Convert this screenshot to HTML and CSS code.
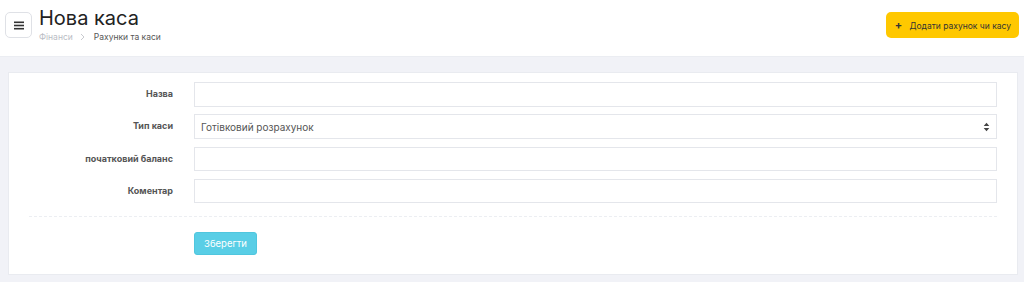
FILE: index.html
```html
<!DOCTYPE html>
<html lang="uk">
<head>
    <meta charset="UTF-8">
    <title>Нова каса</title>
    <link rel="stylesheet" href="styles.css">
</head>
<body>
    <div class="topbar">
        <button class="menu-btn">
            <svg width="10" height="9" viewBox="0 0 10 9"><rect x="0" y="0.5" width="10" height="1.6" fill="#333"/><rect x="0" y="3.7" width="10" height="1.6" fill="#333"/><rect x="0" y="6.9" width="10" height="1.6" fill="#333"/></svg>
        </button>
        <div class="title-block">
            <h1>Нова каса</h1>
            <div class="crumbs">
                <a href="#">Фінанси</a>
                <svg class="sep" width="5" height="8" viewBox="0 0 5 8"><path d="M1 1 L4 4 L1 7" fill="none" stroke="#c8cacf" stroke-width="1"/></svg>
                <span class="current">Рахунки та каси</span>
            </div>
        </div>
        <button class="add-btn"><span class="plus">+</span> Додати рахунок чи касу</button>
    </div>

    <div class="content">
        <div class="card">
            <form class="form">
                <div class="row">
                    <label>Назва</label>
                    <input type="text">
                </div>
                <div class="row">
                    <label>Тип каси</label>
                    <div class="select">
                        <span>Готівковий розрахунок</span>
                        <svg width="7" height="10" viewBox="0 0 7 10"><path d="M0.7 4 L3.5 0.8 L6.3 4 Z M0.7 6 L3.5 9.2 L6.3 6 Z" fill="#444"/></svg>
                    </div>
                </div>
                <div class="row">
                    <label>початковий баланс</label>
                    <input type="text">
                </div>
                <div class="row">
                    <label>Коментар</label>
                    <input type="text">
                </div>
                <div class="divider"></div>
                <div class="row last">
                    <span></span>
                    <div><button type="button" class="save-btn">Зберегти</button></div>
                </div>
            </form>
        </div>
    </div>
</body>
</html>
```
FILE: styles.css
```css
body {
    margin: 0;
    font-family: Inter, "Noto Sans", sans-serif;
    background-color: #f1f2f7;
    color: #333;
}

.topbar {
    display: flex;
    align-items: flex-start;
    height: 56px;
    padding: 0 5px;
    background-color: #fff;
    border-bottom: 1px solid #ebedf2;
}

.menu-btn {
    width: 27px;
    height: 26px;
    margin-top: 12px;
    padding: 0;
    background: #fff;
    border: 1px solid #dfe1e6;
    border-radius: 5px;
    display: flex;
    align-items: center;
    justify-content: center;
}

.title-block {
    margin-left: 7px;
    padding-top: 6px;
}

.title-block h1 {
    margin: 0;
    font-size: 20px;
    font-weight: 400;
    line-height: 24px;
    color: #222;
}

.crumbs {
    font-size: 8.5px;
    line-height: 12px;
    display: flex;
    align-items: center;
    gap: 7px;
    margin-top: 1px;
}

.crumbs a {
    color: #b9bcc4;
    text-decoration: none;
}

.crumbs .current {
    color: #555;
    margin-left: 2px;
}

.add-btn {
    margin-left: auto;
    margin-top: 12px;
    height: 26px;
    padding: 0 8px 0 9px;
    background-color: #ffc800;
    border: none;
    border-radius: 5px;
    font-family: Inter, "Noto Sans", sans-serif;
    font-size: 8.5px;
    color: #333;
}

.add-btn .plus {
    font-weight: 700;
    font-size: 11px;
    margin-right: 5px;
}

.content {
    padding: 15px 6px 7px 8px;
}

.card {
    background-color: #fff;
    border: 1px solid #e9ebf0;
    padding: 9px 20px 19px 0;
}

.row {
    display: grid;
    grid-template-columns: 164px 1fr;
    gap: 21px;
    align-items: center;
    margin-bottom: 7.8px;
}

.row.last {
    margin-bottom: 0;
}

.row label {
    text-align: right;
    font-size: 9px;
    font-weight: 700;
    color: #555;
    align-self: start;
    padding-top: 6px;
}

.row input,
.select {
    height: 24.5px;
    border: 1px solid #e4e6eb;
    box-sizing: border-box;
    font-family: Inter, "Noto Sans", sans-serif;
    font-size: 10px;
    padding: 0 6px;
}

.select {
    display: flex;
    align-items: center;
    justify-content: space-between;
    color: #555;
}

.divider {
    margin: 13px 0 14px 20px;
    border-top: 1px dashed #eceef2;
}

.save-btn {
    height: 23px;
    width: 63px;
    background-color: #59cee6;
    border: 1px solid #50c6de;
    border-radius: 3px;
    color: #fff;
    font-family: Inter, "Noto Sans", sans-serif;
    font-size: 9.5px;
}
```
